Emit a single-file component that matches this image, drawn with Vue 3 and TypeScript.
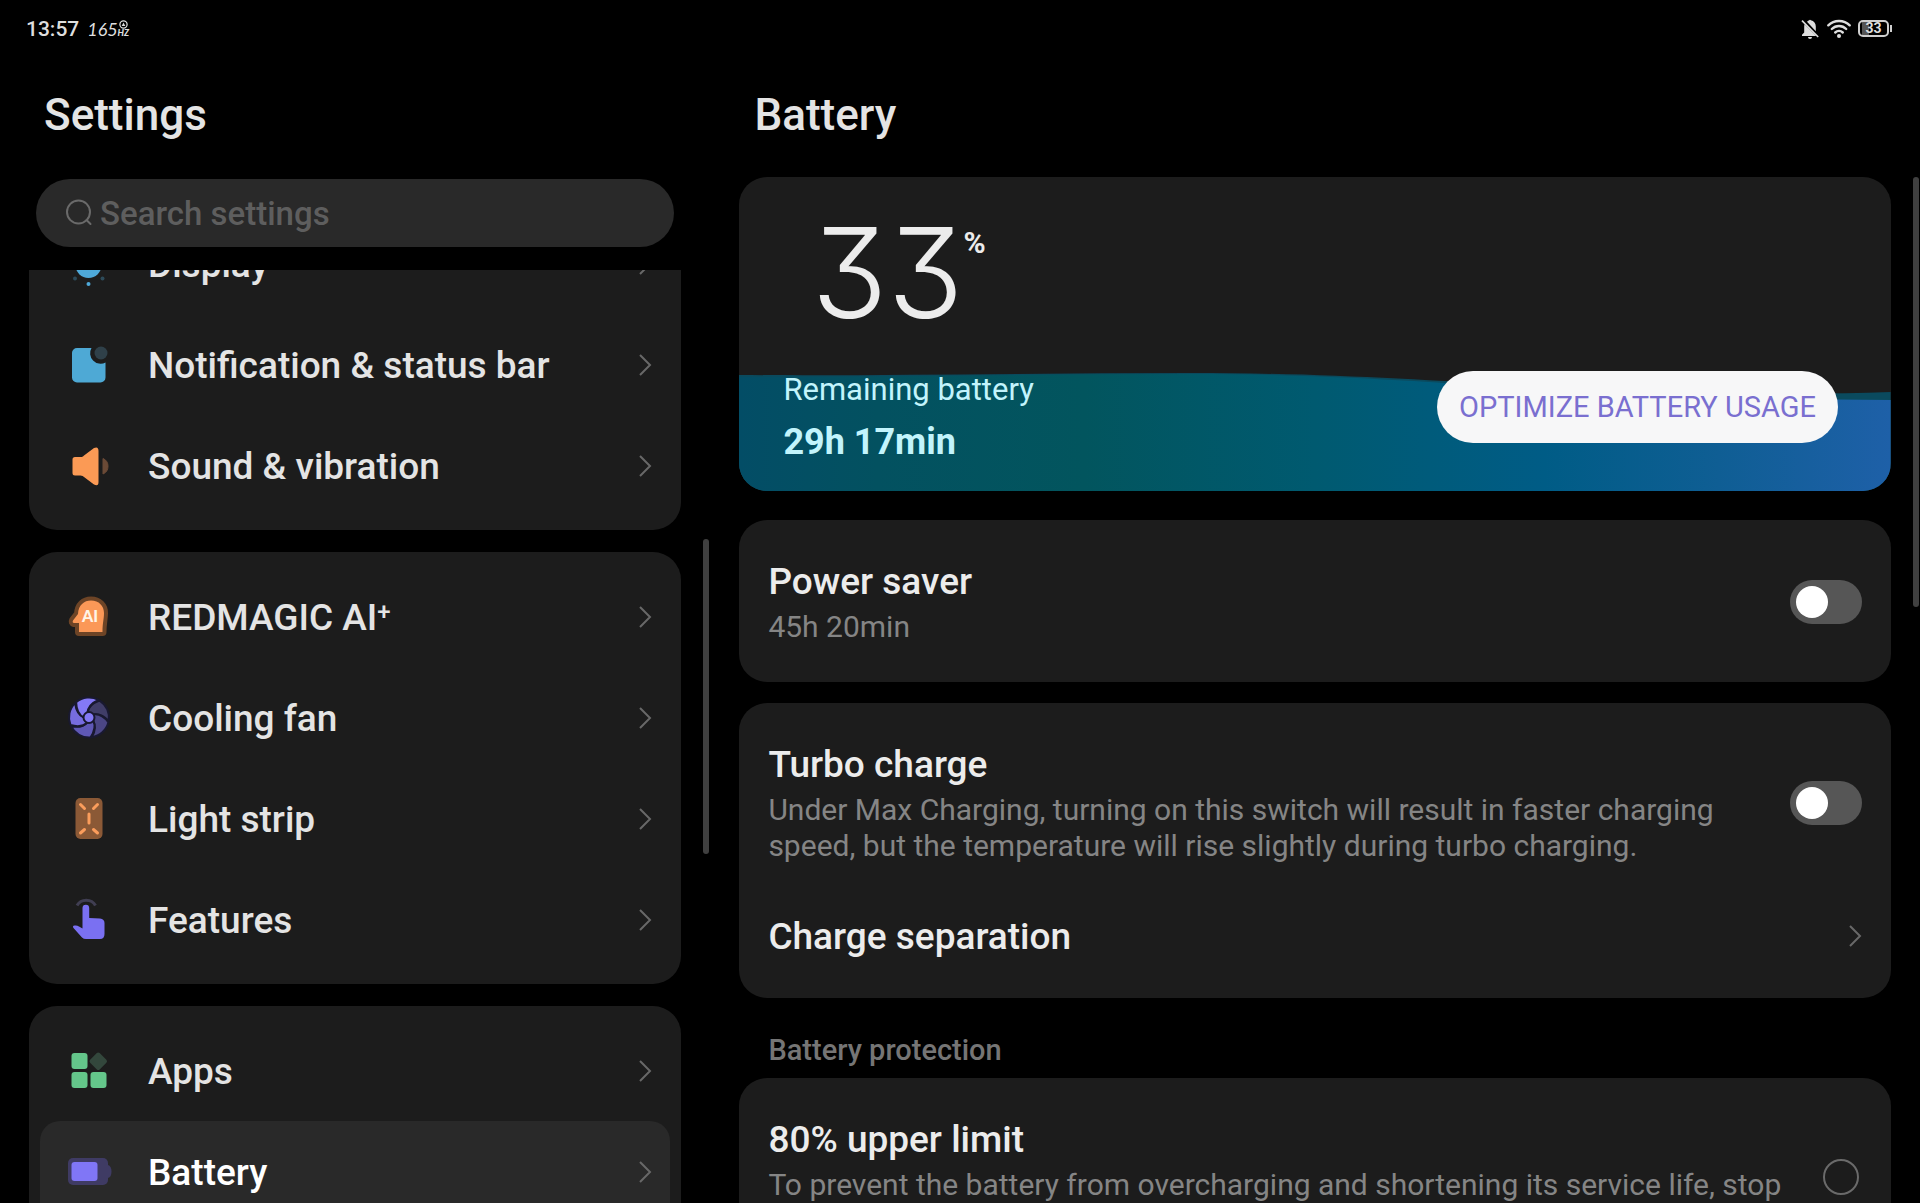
<script setup lang="ts">
import { ref } from 'vue'

interface MenuItem {
  icon: string
  label: string
  sup?: string
  active?: boolean
}

const groups: MenuItem[][] = [
  [
    { icon: 'display', label: 'Display' },
    { icon: 'notification', label: 'Notification & status bar' },
    { icon: 'sound', label: 'Sound & vibration' },
  ],
  [
    { icon: 'ai', label: 'REDMAGIC AI', sup: '+' },
    { icon: 'fan', label: 'Cooling fan' },
    { icon: 'strip', label: 'Light strip' },
    { icon: 'features', label: 'Features' },
  ],
  [
    { icon: 'apps', label: 'Apps' },
    { icon: 'battery', label: 'Battery', active: true },
  ],
]

const query = ref('')
const powerSaver = ref(false)
const turboCharge = ref(false)
const protection = ref('')

const bladeColors = ['#403d68', '#4b4686', '#5f58b6', '#766ce0', '#8479f6']

function polar(radius: number, degrees: number): string {
  const a = (degrees * Math.PI) / 180
  return `${(23 + radius * Math.cos(a)).toFixed(2)} ${(21.5 + radius * Math.sin(a)).toFixed(2)}`
}

// One curved fan blade spanning a fifth of the disc
function blade(index: number): string {
  const a = -58 + index * 72
  return `M${polar(5, a - 50)} Q${polar(13, a - 34)} ${polar(20, a)} A20 20 0 0 1 ${polar(20, a + 68)} Q${polar(13, a + 36)} ${polar(5, a + 22)} Z`
}
</script>

<template>
  <div class="screen">
    <div class="status">
      <div class="status-side">
        <span class="clock">13:57</span>
        <span class="rate">165</span>
        <span class="rate-unit">
          <svg viewBox="0 0 10 10" width="9" height="9" aria-hidden="true">
            <circle cx="5" cy="5" r="4" fill="none" stroke="#dedede" stroke-width="1.4" />
            <path d="M5 2.8 7 6.6H3Z" fill="#dedede" />
          </svg>
          <span class="hz">HZ</span>
        </span>
      </div>
      <div class="status-side right">
        <svg viewBox="0 0 18 20" width="18" height="20" aria-hidden="true">
          <path d="M6 2.8C6.8 1.9 7.6 1.500 8.200 1.300 8.300.500 9.700.500 9.800 1.300 13 1.900 14.800 4.500 14.800 7.500V12.200Z" fill="#dedede" />
          <path d="M3.600 5.200 13.800 15.600 15.200 17H1V15.800L3.200 13.500V7.500C3.200 6.700 3.300 5.900 3.600 5.200Z" fill="#dedede" />
          <path d="M1 1.600 17.200 18" stroke="#dedede" stroke-width="1.600" />
          <path d="M7 18H11A2 2 0 0 1 7 18Z" fill="#dedede" />
        </svg>
        <svg class="wifi" viewBox="0 0 24 20" width="24" height="20" aria-hidden="true">
          <g fill="none" stroke="#dedede" stroke-width="2.400" stroke-linecap="round">
            <path d="M1.300 6.300C7 .500 17 .500 22.700 6.300" />
            <path d="M4.800 10C8.800 6 15.200 6 19.200 10" />
            <path d="M8.200 13.500C10.400 11.500 13.600 11.500 15.800 13.500" />
          </g>
          <circle cx="12" cy="17" r="2" fill="#dedede" />
        </svg>
        <div class="cell"><span>33</span></div>
      </div>
    </div>

    <div class="panes">
      <aside class="pane">
        <h1 class="title">Settings</h1>
        <label class="search">
          <svg viewBox="0 0 28 28" width="28" height="28" aria-hidden="true">
            <g fill="none" stroke="#6a6a6a" stroke-width="2" stroke-linecap="round">
              <circle cx="13.500" cy="13" r="11.500" />
              <path d="M21.500 21 25.500 25" />
            </g>
          </svg>
          <input v-model="query" type="text" placeholder="Search settings" aria-label="Search settings" />
        </label>

        <nav class="list">
          <div class="list-inner">
            <div v-for="(group, g) in groups" :key="g" class="card">
              <a v-for="item in group" :key="item.label" href="#" class="item" :class="{ active: item.active }">
                <svg class="icon" viewBox="0 0 44 44" width="44" height="44" aria-hidden="true">
                  <template v-if="item.icon === 'display'">
                    <circle cx="22.500" cy="23" r="13" fill="#4ea9d9" />
                    <circle cx="22.500" cy="42" r="2" fill="#4ea9d9" />
                    <circle cx="9" cy="36.500" r="2" fill="#2d4b5a" />
                    <circle cx="36.500" cy="36.500" r="2" fill="#2d4b5a" />
                  </template>
                  <template v-else-if="item.icon === 'notification'">
                    <path d="M11 5H25.500A10.500 10.500 0 0 0 39.500 19.500V34.500A5 5 0 0 1 34.500 39.500H11A5 5 0 0 1 6 34.500V10A5 5 0 0 1 11 5Z" fill="#4ea9d5" />
                    <circle cx="35" cy="10" r="6.500" fill="#2f4049" />
                  </template>
                  <template v-else-if="item.icon === 'sound'">
                    <path d="M9 13H14.500C16 13 17 12.500 18 11.500L28 4Q32.500 2 32.500 7V38Q32.500 43 28 40.500L18 33Q17 31.500 14.500 31.500H9Q6.500 31.500 6.500 29V15.500Q6.500 13 9 13Z" fill="#fb9a55" />
                    <path d="M37 14.500A8.500 8.500 0 0 1 37 30Z" fill="#6b4a36" stroke="#6b4a36" stroke-width="1" />
                  </template>
                  <template v-else-if="item.icon === 'ai'">
                    <path d="M13 37V28H8Q6 27.500 7 25.500L12 19C12.500 10 18 5.500 25 5.500 33 5.500 38 11 38 18 38 24 36.500 28 36.500 37Z" fill="#6d4426" stroke="#6d4426" stroke-width="8" stroke-linejoin="round" />
                    <path d="M13 37V28H8Q6 27.500 7 25.500L12 19C12.500 10 18 5.500 25 5.500 33 5.500 38 11 38 18 38 24 36.500 28 36.500 37Z" fill="#fb9857" />
                    <text x="24" y="26.500" text-anchor="middle" font-family="Lato, sans-serif" font-size="16" font-weight="900" fill="#fff4e6">AI</text>
                  </template>
                  <template v-else-if="item.icon === 'fan'">
                    <path v-for="(color, i) in bladeColors" :key="color" :d="blade(i)" :fill="color" stroke="#191930" stroke-width="2" stroke-linejoin="round" />
                    <circle cx="23" cy="21.500" r="5.500" fill="#8479f6" stroke="#191930" stroke-width="2" />
                  </template>
                  <template v-else-if="item.icon === 'strip'">
                    <rect x="9.500" y="1" width="27" height="41" rx="5" fill="#8b5936" />
                    <path d="M14.500 7.500 18.500 11.500M31.500 7.500 27.500 11.500M23 17V26M18.500 32.500 14.500 36M27.500 32.500 31.500 36" fill="none" stroke="#fb9d5c" stroke-width="3" stroke-linecap="round" />
                  </template>
                  <template v-else-if="item.icon === 'features'">
                    <path d="M11 7.500C15 .500 25.500 .500 29.500 7.500" fill="none" stroke="#403e52" stroke-width="3" />
                    <path d="M16.500 10A3.300 3.300 0 0 1 23.200 10V20L34 20.500Q38.500 21 38.500 25V36Q38.500 41 34 41H20Q17.500 41 16 39.500L7.500 30Q6 28 8.500 27.500 11 27 13 28.500L16.500 30.500Z" fill="#7a70f2" />
                  </template>
                  <template v-else-if="item.icon === 'apps'">
                    <g fill="#64c68a">
                      <rect x="5.500" y="4" width="16" height="16" rx="3" />
                      <rect x="5.500" y="23" width="16" height="16" rx="3" />
                      <rect x="24.500" y="23" width="16" height="16" rx="3" />
                    </g>
                    <rect x="25.500" y="5.500" width="13.500" height="13.500" rx="2" fill="#33473c" transform="rotate(45 32.250 12.250)" />
                  </template>
                  <template v-else>
                    <rect x="2" y="8" width="40" height="27" rx="5" fill="#3f3b64" />
                    <path d="M42 15Q45.500 16 45.500 21.500T42 28Z" fill="#3f3b64" />
                    <rect x="5.500" y="12" width="26" height="19" rx="3" fill="#8076f6" />
                  </template>
                </svg>
                <span class="item-label">{{ item.label }}<sup v-if="item.sup">{{ item.sup }}</sup></span>
                <svg class="chevron" viewBox="0 0 14 24" width="14" height="24" aria-hidden="true">
                  <path d="M2 2 12 12 2 22" fill="none" stroke="#686868" stroke-width="2" />
                </svg>
              </a>
            </div>
          </div>
        </nav>
        <div class="thumb thumb-left"></div>
      </aside>

      <main class="pane">
        <h1 class="title">Battery</h1>
        <section class="level">
          <svg class="water" viewBox="0 0 1152 314" preserveAspectRatio="none" aria-hidden="true">
            <defs>
              <linearGradient id="water" x1="0" y1="0" x2="1" y2="0">
                <stop offset="0" stop-color="#034d66" />
                <stop offset="0.120" stop-color="#035160" />
                <stop offset="0.300" stop-color="#02555e" />
                <stop offset="0.500" stop-color="#005a70" />
                <stop offset="0.700" stop-color="#005c86" />
                <stop offset="0.850" stop-color="#0f5e94" />
                <stop offset="1" stop-color="#1e60a8" />
              </linearGradient>
            </defs>
            <path d="M0 198C150 199 300 196 450 196 650 196 750 211 1000 216 1050 217 1100 217 1152 215V314H0Z" fill="#0a4a5e" />
            <path d="M0 200C150 200 300 197 450 197 650 197 750 213 1000 220 1050 222 1100 223 1152 223V314H0Z" fill="url(#water)" />
          </svg>
          <div class="percent"><span class="digits">33</span><span class="sign">%</span></div>
          <div class="level-foot">
            <div class="remaining">
              <p>Remaining battery</p>
              <strong>29h 17min</strong>
            </div>
            <button type="button" class="optimize">OPTIMIZE BATTERY USAGE</button>
          </div>
        </section>

        <section class="card">
          <label class="row">
            <span class="text">
              <span class="name">Power saver</span>
              <span class="desc">45h 20min</span>
            </span>
            <input v-model="powerSaver" type="checkbox" role="switch" class="switch" />
          </label>
        </section>

        <section class="card">
          <label class="row">
            <span class="text">
              <span class="name">Turbo charge</span>
              <span class="desc">Under Max Charging, turning on this switch will result in faster charging speed, but the temperature will rise slightly during turbo charging.</span>
            </span>
            <input v-model="turboCharge" type="checkbox" role="switch" class="switch" />
          </label>
          <a href="#" class="row single">
            <span class="name">Charge separation</span>
            <svg class="chevron" viewBox="0 0 14 24" width="14" height="24" aria-hidden="true">
              <path d="M2 2 12 12 2 22" fill="none" stroke="#686868" stroke-width="2" />
            </svg>
          </a>
        </section>

        <h2 class="section">Battery protection</h2>
        <section class="card">
          <label class="row limit">
            <span class="text">
              <span class="name">80% upper limit</span>
              <span class="desc">To prevent the battery from overcharging and shortening its service life, stop</span>
            </span>
            <input v-model="protection" type="radio" name="protection" value="80" class="radio" />
          </label>
        </section>
        <div class="thumb thumb-right"></div>
      </main>
    </div>
  </div>
</template>

<style>
body {
  margin: 0;
  background: #000;
}
</style>

<style scoped>
.screen {
  display: flex;
  flex-direction: column;
  height: 100vh;
  overflow: hidden;
  background: #000;
  color: #e4e4e4;
  font-family: Roboto, "Noto Sans", sans-serif;
}

.status {
  display: flex;
  justify-content: space-between;
  flex: none;
  height: 57px;
  padding: 0 28px 0 26px;
  color: #dedede;
}

.status-side {
  display: flex;
  align-items: center;
}

.clock {
  margin-right: 8px;
  font-size: 21px;
  font-weight: 500;
}

.rate {
  font-family: Lato, sans-serif;
  font-size: 18px;
  font-style: italic;
}

.rate-unit {
  display: flex;
  flex-direction: column;
  align-items: center;
  width: 11px;
}

.hz {
  font-family: Lato, sans-serif;
  font-size: 9px;
  font-style: italic;
  font-weight: 900;
  line-height: 8px;
}

.wifi {
  margin: 0 7px 0 8px;
}

.cell {
  position: relative;
  display: flex;
  align-items: center;
  justify-content: center;
  box-sizing: border-box;
  width: 31px;
  height: 17px;
  margin-right: 3px;
  border: 2px solid #cfcfcf;
  border-radius: 5px;
  background: linear-gradient(90deg, #000 2px, #555 2px, #555 9px, #000 9px);
  font-size: 14px;
  font-weight: 700;
  line-height: 13px;
}

.cell::after {
  content: "";
  position: absolute;
  right: -5px;
  width: 2px;
  height: 7px;
  background: #cfcfcf;
}

.panes {
  display: grid;
  grid-template-columns: 37% 63%;
  flex: 1;
  min-height: 0;
}

.pane {
  position: relative;
  display: flex;
  flex-direction: column;
  min-width: 0;
  min-height: 0;
  padding: 0 29px;
}

.title {
  flex: none;
  margin: 32px 0 36px 15px;
  font-size: 44px;
  font-weight: 500;
  line-height: 52px;
}

.search {
  display: flex;
  align-items: center;
  flex: none;
  gap: 7px;
  height: 68px;
  margin: 2px 7px 23px;
  padding: 0 29px;
  border-radius: 34px;
  background: #292929;
}

.search input {
  flex: 1;
  min-width: 0;
  padding: 0;
  border: 0;
  outline: 0;
  background: none;
  color: #e4e4e4;
  font-family: inherit;
  font-size: 33px;
  font-weight: 500;
}

.search input::placeholder {
  color: #5e5e5e;
  opacity: 1;
}

.list {
  flex: 1;
  min-height: 0;
  overflow: hidden;
}

.list-inner {
  display: flex;
  flex-direction: column;
  gap: 22px;
  margin-top: -71px;
}

.card {
  flex: none;
  padding: 14px 0;
  border-radius: 28px;
  background: #1c1c1c;
}

.item {
  display: flex;
  align-items: center;
  height: 101px;
  margin: 0 11px;
  padding: 0 18px 0 26px;
  border-radius: 20px;
  color: inherit;
  text-decoration: none;
}

.item.active {
  background: #292929;
  color: #fff;
}

.icon {
  flex: none;
  overflow: visible;
}

.item-label {
  flex: 1;
  margin-left: 38px;
  padding-top: 2px;
  font-size: 37px;
  font-weight: 500;
  line-height: 44px;
  white-space: nowrap;
}

.item-label sup {
  font-size: 24px;
  line-height: 0;
  vertical-align: 10px;
}

.chevron {
  flex: none;
}

.thumb {
  position: absolute;
  border-radius: 3px;
  background: #404040;
}

.thumb-left {
  top: 482px;
  right: 1px;
  width: 6px;
  height: 315px;
}

.thumb-right {
  top: 120px;
  right: 1px;
  width: 6px;
  height: 430px;
}

.level {
  position: relative;
  display: flex;
  flex-direction: column;
  justify-content: space-between;
  flex: none;
  box-sizing: border-box;
  height: 314px;
  margin-bottom: 29px;
  padding: 36px 53px 26px 44px;
  border-radius: 28px;
  overflow: hidden;
  background: #1c1c1c;
}

.water {
  position: absolute;
  inset: 0;
  width: 100%;
  height: 100%;
}

.percent {
  position: relative;
  display: flex;
  padding-left: 28px;
  color: #ececec;
}

.digits {
  font-family: Inter, sans-serif;
  font-size: 125px;
  font-weight: 300;
  line-height: 120px;
  font-feature-settings: "cv09" 1;
}

.sign {
  margin-top: 12px;
  font-size: 30px;
  font-weight: 700;
  line-height: 36px;
}

.level-foot {
  position: relative;
  display: flex;
  align-items: center;
  justify-content: space-between;
}

.remaining {
  color: #c2f4fc;
}

.remaining p {
  margin: 0 0 12px;
  font-size: 31px;
  line-height: 36px;
}

.remaining strong {
  display: block;
  font-size: 36px;
  font-weight: 700;
  line-height: 44px;
}

.optimize {
  height: 72px;
  margin-bottom: 22px;
  padding: 0 22px;
  border: 0;
  border-radius: 36px;
  background: #f7f7f8;
  color: #7a6fd0;
  font-family: inherit;
  font-size: 29px;
  white-space: nowrap;
}

main .card + .card {
  margin-top: 21px;
}

.row {
  display: flex;
  align-items: center;
  justify-content: space-between;
  padding: 24px 29px 23px;
  color: #ececec;
  text-decoration: none;
}

.row.single {
  min-height: 50px;
}

.row.limit {
  min-height: 122px;
  padding-right: 32px;
}

.limit .text {
  align-self: flex-start;
}

.text {
  display: flex;
  flex-direction: column;
  gap: 5px;
}

.name {
  padding-top: 2px;
  font-size: 37px;
  font-weight: 500;
  line-height: 44px;
}

.desc {
  color: #858585;
  font-size: 30px;
  line-height: 36px;
}

.switch {
  appearance: none;
  position: relative;
  flex: none;
  width: 72px;
  height: 44px;
  margin: 0 0 0 48px;
  border-radius: 22px;
  background: #565656;
}

.switch::before {
  content: "";
  position: absolute;
  top: 6px;
  left: 6px;
  width: 32px;
  height: 32px;
  border-radius: 50%;
  background: #fff;
}

.switch:checked {
  background: #7a70f2;
}

.switch:checked::before {
  left: 34px;
}

.radio {
  appearance: none;
  box-sizing: border-box;
  flex: none;
  width: 36px;
  height: 36px;
  margin: 0;
  border: 2px solid #6a6a6a;
  border-radius: 50%;
}

.radio:checked {
  border: 10px solid #7a70f2;
}

.section {
  flex: none;
  margin: 34px 0 10px 29px;
  color: #757575;
  font-size: 29px;
  font-weight: 500;
  line-height: 36px;
}
</style>
